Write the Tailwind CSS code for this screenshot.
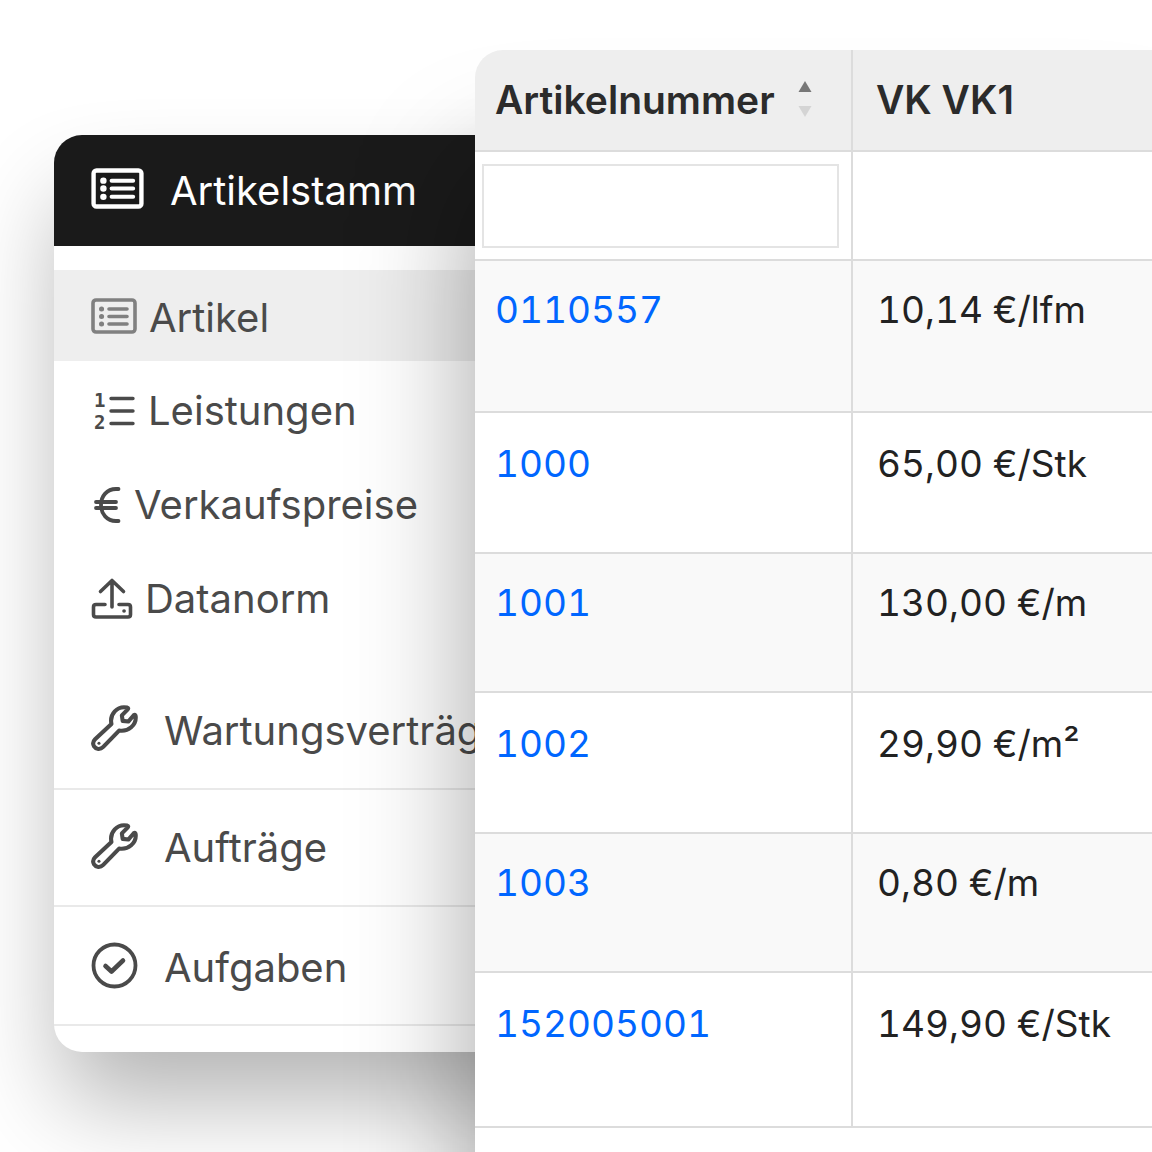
<!DOCTYPE html>
<html lang="de">
  <head>
    <title>Artikelstamm</title>
    <meta charset="utf-8">
    <meta name="viewport" content="width=device-width, initial-scale=1.0">
    <script src="https://cdn.jsdelivr.net/npm/@tailwindcss/browser@4"></script>
  </head>
  <body class="bg-white font-[Inter,sans-serif] overflow-hidden">
    <svg class="hidden">
      <symbol id="wrench" viewBox="0 0 46 46">
        <path d="M4 34.500 20 19.500C18 10 25.500 1.500 35.500 3.500Q37 4 36 5.200L30.200 11.200 31 16.500 36.500 17.200 41.800 11Q43.400 9.800 43.700 11.800C44.700 20.500 36.500 27.500 27.500 26L12 42C9 45 4.800 44.400 3 41.500C1.500 39 2 36.500 4 34.500Z" fill="none" stroke="currentColor" stroke-width="4" stroke-linejoin="round" />
        <circle cx="7.800" cy="38.500" r="1.500" fill="currentColor" />
      </symbol>
    </svg>

    <div class="grid grid-cols-[475px_1fr] h-screen overflow-hidden">
      <!-- Sidebar, runs on underneath the table panel -->
      <nav
        class="ml-[54px] -mr-40 mt-[135px] pb-[26px] self-start rounded-[28px] bg-white text-[#4a4a4a] text-[40px] font-normal leading-[48px] shadow-[0_56px_96px_-8px_rgba(0,0,0,0.3)]"
      >
        <h1 class="flex items-center h-[111px] pl-[37px] gap-[26px] rounded-t-[28px] bg-[#1a1a1a] text-white">
          <svg class="w-[53px] h-[41px] mb-1" viewBox="0 0 54 42" fill="none" stroke="currentColor" stroke-linecap="round">
            <rect x="2.500" y="2.500" width="49" height="37" rx="3" stroke-width="4.500" />
            <path d="M21 13h22M21 21h22M21 29.500h22" stroke-width="4.200" />
            <path d="M12.500 13h.1M12.500 21h.1M12.500 29.500h.1" stroke-width="6.500" />
          </svg>
          Artikelstamm
        </h1>

        <ul class="pt-6">
          <li class="mb-[3px] bg-[#eee]">
            <a href="#" class="flex items-center h-[91px] pt-1 pl-[37px] gap-3">
              <svg class="w-[46px] h-[36px] mb-1 text-[#808080]" viewBox="0 0 46 36" fill="none" stroke="currentColor" stroke-linecap="round">
                <rect x="2" y="2" width="42" height="32" rx="3" stroke-width="3.600" />
                <path d="M18 11h18M18 18.500h18M18 26h18" stroke-width="3.600" />
                <path d="M10.500 11h.1M10.500 18.500h.1M10.500 26h.1" stroke-width="5" />
              </svg>
              Artikel
            </a>
          </li>
          <li>
            <a href="#" class="flex items-center h-[94px] pl-10 gap-3">
              <svg class="w-[42px] h-[38px] overflow-visible" viewBox="0 0 42 38" fill="none" stroke="currentColor" stroke-linecap="round">
                <text x="0" y="15" fill="currentColor" stroke="none" class="font-['DejaVu_Sans_Mono'] text-[19px] leading-none font-bold">1</text>
                <text x="0" y="37" fill="currentColor" stroke="none" class="font-['DejaVu_Sans_Mono'] text-[19px] leading-none font-bold">2</text>
                <path d="M17 6.500h22M17 19h22M17 31.500h22" stroke-width="3.400" />
              </svg>
              Leistungen
            </a>
          </li>
          <li>
            <a href="#" class="flex items-center h-[94px] pl-10 gap-3">
              <svg class="w-[28px] h-[38px]" viewBox="0 0 28 38" fill="none" stroke="currentColor" stroke-linecap="round">
                <path d="M24.500 3H22C13 3 7 10 7 19S13 35 22 35H24.500M2 16H22M2 22H22" stroke-width="3.800" />
              </svg>
              Verkaufspreise
            </a>
          </li>
          <li>
            <a href="#" class="flex items-center h-[94px] pl-[37px] gap-3">
              <svg class="w-[42px] h-[42px]" viewBox="0 0 42 42" fill="none" stroke="currentColor" stroke-linecap="round" stroke-linejoin="round">
                <path d="M14 26.500H5Q2.500 26.500 2.500 29V36.500Q2.500 39 5 39H37Q39.500 39 39.500 36.500V29Q39.500 26.500 37 26.500H28" stroke-width="3.600" />
                <path d="M21 29V3M9.500 13.500 21 2.500 32.500 13.500" stroke-width="3.600" />
                <path d="M33 33h.1" stroke-width="3.600" />
              </svg>
              Datanorm
            </a>
          </li>
        </ul>

        <ul class="pt-6 whitespace-nowrap">
          <li class="border-b-2 border-[#e9e9e9]">
            <a href="#" class="flex items-center h-[118px] pt-1 pl-[37px] gap-[26px]">
              <svg class="w-[47px] h-[47px] mb-2"><use href="#wrench" /></svg>
              Wartungsverträge
            </a>
          </li>
          <li class="border-b-2 border-[#e9e9e9]">
            <a href="#" class="flex items-center h-[115px] pl-[37px] gap-[26px]">
              <svg class="w-[47px] h-[47px] mb-1"><use href="#wrench" /></svg>
              Aufträge
            </a>
          </li>
          <li class="border-b-2 border-[#e9e9e9]">
            <a href="#" class="flex items-center h-[117px] pt-1 pl-[37px] gap-[26px]">
              <svg class="w-[47px] h-[47px] mb-1" viewBox="0 0 47 47" fill="none" stroke="currentColor" stroke-linecap="round" stroke-linejoin="round">
                <circle cx="23.500" cy="23.500" r="21" stroke-width="3.800" />
                <path d="M14.500 24 20.500 29.500 32 18.500" stroke-width="4.600" />
              </svg>
              Aufgaben
            </a>
          </li>
        </ul>
      </nav>

      <!-- Article table -->
      <main class="relative z-10 mt-[50px] rounded-tl-[28px] bg-white shadow-[0_120px_120px_rgba(0,0,0,0.36)]">
        <table class="w-full table-fixed border-separate border-spacing-0 text-left text-[37px] font-normal leading-[50px] tabular-nums text-[#222]">
          <thead>
            <tr class="h-[102px] text-[39px] text-[#2b2b2b]">
              <th class="w-[378px] pl-5 rounded-tl-[28px] bg-[#eee] border-b-2 border-r-2 border-[#dcdcdc] font-semibold">
                <div class="flex items-center justify-between pr-[39px]">
                  Artikelnummer
                  <button type="button" aria-label="Sortieren">
                    <svg class="w-[14px] h-[38px]" viewBox="0 0 14 38">
                      <path d="M7 0 13.500 11H.5Z" fill="#777" />
                      <path d="M7 36 13.500 25H.5Z" fill="#d4d4d4" />
                    </svg>
                  </button>
                </div>
              </th>
              <th class="pl-[23px] bg-[#eee] border-b-2 border-[#dcdcdc] font-semibold proportional-nums">VK VK1</th>
            </tr>
            <tr class="h-[109px]">
              <td class="pl-[7px] pr-3 border-b-2 border-r-2 border-[#dcdcdc]">
                <input type="text" aria-label="Artikelnummer filtern" class="block w-full h-[84px] px-3 border-2 border-[#e4e4e4] bg-white">
              </td>
              <td class="border-b-2 border-[#dcdcdc]"></td>
            </tr>
          </thead>
          <tbody class="align-top">
            <tr class="h-[152px] bg-[#f9f9f9]">
              <td class="pl-5 pt-6 border-b-2 border-r-2 border-[#dcdcdc]"><a href="#" class="text-[#0066ff]">0110557</a></td>
              <td class="pl-6 pt-6 border-b-2 border-[#dcdcdc]">10,14 €/lfm</td>
            </tr>
            <tr class="h-[141px]">
              <td class="pl-5 pt-[26px] border-b-2 border-r-2 border-[#dcdcdc]"><a href="#" class="text-[#0066ff]">1000</a></td>
              <td class="pl-6 pt-[26px] border-b-2 border-[#dcdcdc]">65,00 €/Stk</td>
            </tr>
            <tr class="h-[139px] bg-[#f9f9f9]">
              <td class="pl-5 pt-6 border-b-2 border-r-2 border-[#dcdcdc]"><a href="#" class="text-[#0066ff]">1001</a></td>
              <td class="pl-6 pt-6 border-b-2 border-[#dcdcdc]">130,00 €/m</td>
            </tr>
            <tr class="h-[141px]">
              <td class="pl-5 pt-[26px] border-b-2 border-r-2 border-[#dcdcdc]"><a href="#" class="text-[#0066ff]">1002</a></td>
              <td class="pl-6 pt-[26px] border-b-2 border-[#dcdcdc]">29,90 €/m²</td>
            </tr>
            <tr class="h-[139px] bg-[#f9f9f9]">
              <td class="pl-5 pt-6 border-b-2 border-r-2 border-[#dcdcdc]"><a href="#" class="text-[#0066ff]">1003</a></td>
              <td class="pl-6 pt-6 border-b-2 border-[#dcdcdc]">0,80 €/m</td>
            </tr>
            <tr class="h-[155px]">
              <td class="pl-5 pt-[26px] border-b-2 border-r-2 border-[#dcdcdc]"><a href="#" class="text-[#0066ff]">152005001</a></td>
              <td class="pl-6 pt-[26px] border-b-2 border-[#dcdcdc]">149,90 €/Stk</td>
            </tr>
          </tbody>
        </table>
      </main>
    </div>
  </body>
</html>
